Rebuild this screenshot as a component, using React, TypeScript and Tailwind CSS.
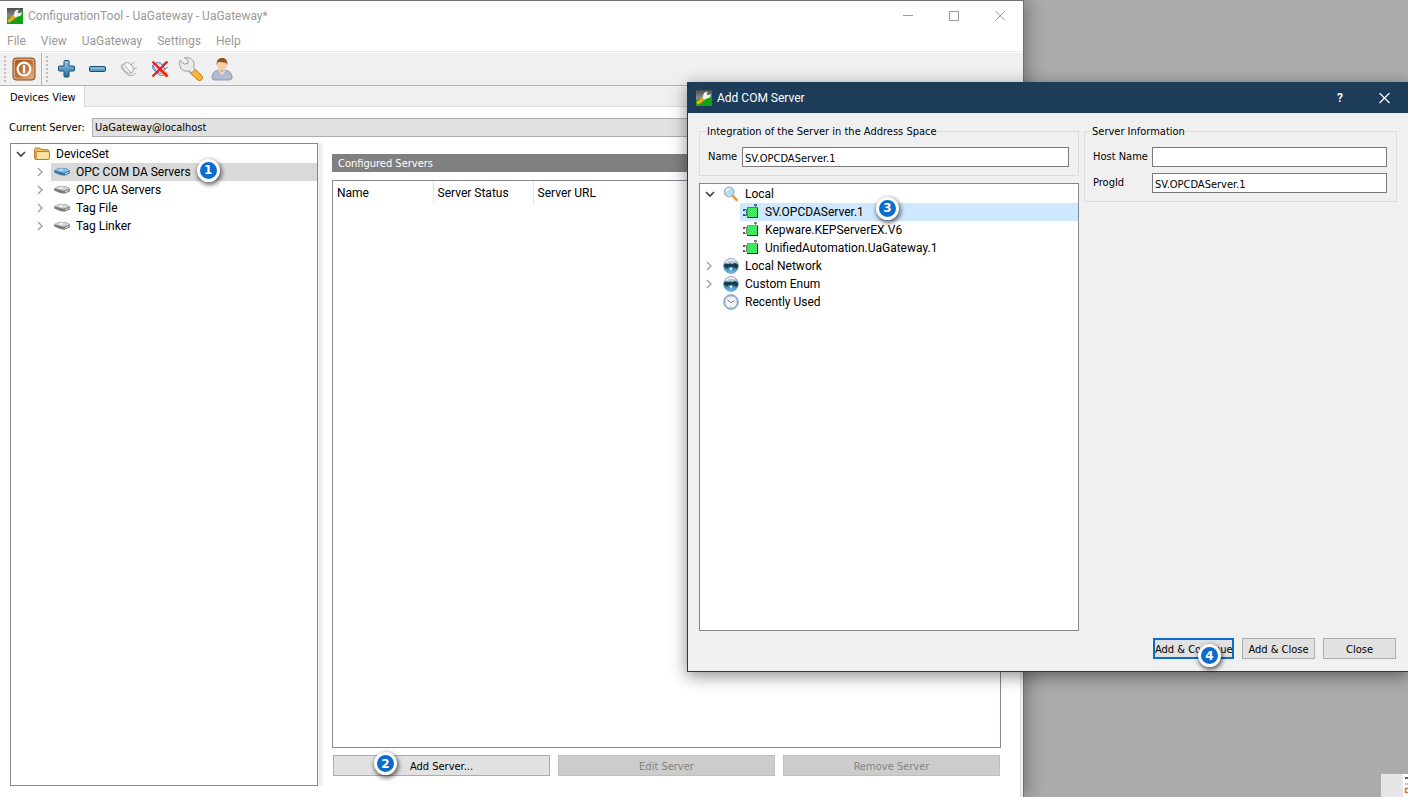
import React from "react";
import clsx from "clsx";

const AppIcon = () => (
  <svg width="16" height="16" viewBox="0 0 16 16" className="shrink-0">
    <defs>
      <linearGradient id="appTop" x1="0" y1="0" x2="0" y2="1">
        <stop offset="0" stopColor="#4c4c4c" />
        <stop offset="1" stopColor="#9a9a9a" />
      </linearGradient>
    </defs>
    <rect width="16" height="16" fill="#12a312" />
    <path d="M0 0H16V3C12 7 6 7 0 10Z" fill="url(#appTop)" />
    <path d="M2.4 12.6 7 8.8" stroke="#f6a423" strokeWidth="3.6" strokeLinecap="round" />
    <path
      d="M6.6 7.6 7.4 4.8C7.8 2.6 9.8 1.2 12 1.8L10.4 4 12.2 5.6 14.6 4C15.2 6.8 13 8.8 10.6 8.4L8.8 9.8Z"
      fill="#f2f2f2"
    />
  </svg>
);

const PowerIcon = () => (
  <svg width="24" height="24" viewBox="0 0 24 24">
    <defs>
      <linearGradient id="powerFill" x1="0" y1="0" x2="1" y2="1">
        <stop offset="0" stopColor="#a85a24" />
        <stop offset="0.6" stopColor="#c4763c" />
        <stop offset="1" stopColor="#e8b080" />
      </linearGradient>
    </defs>
    <rect x="1" y="1" width="22" height="22" rx="3" fill="#d9a273" stroke="#8a4a1c" />
    <rect x="3" y="3" width="18" height="18" rx="2" fill="url(#powerFill)" />
    <circle cx="12" cy="12" r="6.4" fill="none" stroke="#fff" strokeWidth="2.2" />
    <path d="M12 9V15" stroke="#fff" strokeWidth="2.4" strokeLinecap="round" />
  </svg>
);

const PlusIcon = () => (
  <svg width="20" height="20" viewBox="0 0 20 20">
    <defs>
      <linearGradient id="blueFill" x1="0" y1="0" x2="0" y2="1">
        <stop offset="0" stopColor="#a3cfe6" />
        <stop offset="0.5" stopColor="#5a9dc2" />
        <stop offset="1" stopColor="#2f6f99" />
      </linearGradient>
    </defs>
    <path
      d="M7 2.5Q7 1.5 8 1.5H11Q12 1.5 12 2.5V7H16.5Q17.5 7 17.5 8V11Q17.5 12 16.5 12H12V17Q12 18 11 18H8Q7 18 7 17V12H2.5Q1.5 12 1.5 11V8Q1.5 7 2.5 7H7Z"
      fill="url(#blueFill)"
      stroke="#1c4d6e"
    />
  </svg>
);

const MinusIcon = () => (
  <svg width="20" height="20" viewBox="0 0 20 20">
    <rect x="1.5" y="7.5" width="16" height="5" rx="1" fill="#5a9dc2" stroke="#1c4d6e" />
    <path d="M3 9H16" stroke="#a3cfe6" />
  </svg>
);

const PlugIcon = ({ crossed = false }: { crossed?: boolean }) => (
  <svg width="20" height="20" viewBox="0 0 20 20">
    <g
      fill={crossed ? "#cfe0f0" : "#f6f6f6"}
      stroke={crossed ? "#5b87b4" : "#a8a8a8"}
      strokeLinecap="round"
      strokeLinejoin="round"
    >
      <path d="M3 6 7 3.5 10.5 4 14.5 9 14 13 10 14.5 6.5 12.5Z" />
      <path d="M5 5.5 11.5 13.5" fill="none" />
      <path
        d="M12.5 5.5 15 3.5M15 10 17.5 8.5M3 6 2.5 9 6 13.5 10 16.5 14.5 16 16.5 14"
        fill="none"
      />
    </g>
    {crossed && (
      <>
        <path d="M12 12 17 17" stroke="#f0a52c" strokeWidth="4" />
        <path d="M2.5 2.5 17.5 17.5M17.5 2.5 2.5 17.5" stroke="#fb1010" strokeWidth="2" />
      </>
    )}
  </svg>
);

const WrenchIcon = () => (
  <svg width="24" height="24" viewBox="0 0 24 24">
    <path d="M13.5 14 20.5 20.5" stroke="#b87414" strokeWidth="6.6" strokeLinecap="round" />
    <path d="M13.5 14 20.5 20.5" stroke="#f9b23a" strokeWidth="5.2" strokeLinecap="round" />
    <path
      d="M1 3.2 5.2 7.2 8.6 6.4 9.2 3.4 5.6.8C9.5-.2 14 2 14.8 5.4 15.2 7.4 14.8 9 14.4 10.2L16.2 12.2 12.4 16 10.4 13.8C6.4 15 2.6 13.4 1.2 9.8.4 7.6.4 5.2 1 3.2Z"
      fill="#ebebeb"
      stroke="#9a9a9a"
    />
  </svg>
);

const UserIcon = () => (
  <svg width="24" height="24" viewBox="0 0 24 24">
    <path
      d="M2 20.5C2 16 5 13.5 9 13.2H15C19 13.5 22 16 22 20.5Q22 22.8 19.5 23H4.5Q2 22.8 2 20.5Z"
      fill="#b3bbcf"
      stroke="#7c88a8"
      strokeWidth="0.8"
    />
    <path d="M8.6 13.2 12 18 15.4 13.2Z" fill="#e9edf6" />
    <path d="M10 11H14V14L12 16 10 14Z" fill="#e9b384" />
    <ellipse cx="12" cy="7.6" rx="4.8" ry="5.6" fill="#f6cda3" />
    <path
      d="M6.8 8.2C6 3.4 8.4.9 12 .9S18.2 3.4 17.2 8.2C16.8 6.4 16 5.6 14.6 5.4 11.6 5.6 8.6 4.6 8 5.2 7.4 5.8 7.2 6.8 6.8 8.2Z"
      fill="#965321"
    />
  </svg>
);

const FolderIcon = () => (
  <svg width="16" height="16" viewBox="0 0 16 16">
    <path
      d="M.6 3.4Q.6 2 2 2H5.4Q6.4 2 7 3.6H13.4Q14.4 3.6 14.4 4.6V13.4H1.6Q.6 13.4.6 12.4Z"
      fill="#eebd67"
      stroke="#b97a2a"
    />
    <path d="M2.2 5.6H15.4V12.6Q15.4 13.5 14.4 13.5H2.2Z" fill="#fde3a0" stroke="#b97a2a" />
  </svg>
);

const DeviceIcon = ({ active = false }: { active?: boolean }) => (
  <svg width="16" height="16" viewBox="0 0 16 16">
    <path
      d="M.2 6.2Q4 4 7 3.8L13 4.6 15.8 6.6V9.4L10.4 11.8 6 11 .2 8.4Z"
      fill={active ? "#3f76a8" : "#7b7b7b"}
    />
    <path
      d="M.4 6.2Q4 4.2 7 4L12.6 4.8 15.4 6.6 9.8 8.8Z"
      fill={active ? "#8dbbe3" : "#d2d2d2"}
    />
    <path d="M4 6.2 7 5 10 5.8 7 7.2Z" fill={active ? "#bcdcf5" : "#f0f0f0"} />
    <path d="M11 10 14.6 8.3" stroke="#e8e8e8" />
  </svg>
);

const SearchIcon = () => (
  <svg width="16" height="16" viewBox="0 0 16 16">
    <path d="M9.6 9.6 13.6 13.8" stroke="#e79a34" strokeWidth="2.6" strokeLinecap="round" />
    <circle cx="6.2" cy="6" r="4.8" fill="#b9dcf3" stroke="#9fb3c4" strokeWidth="1.3" />
    <path d="M3.4 5.4Q4 3.2 6.4 3" stroke="#fff" strokeWidth="1.3" fill="none" />
  </svg>
);

const ComServerIcon = ({ selected = false }: { selected?: boolean }) => (
  <svg width="16" height="16" viewBox="0 0 16 16" shapeRendering="crispEdges">
    <defs>
      <pattern id="checker" width="2" height="2" patternUnits="userSpaceOnUse">
        <rect width="2" height="2" fill="#2fdc50" />
        <rect width="1" height="1" fill="#6fe08a" />
        <rect x="1" y="1" width="1" height="1" fill="#6fe08a" />
      </pattern>
    </defs>
    <path
      d="M2 5H5V6H2ZM2 11H4V12H2ZM3 5H4V12H3ZM12 0H13V4H12ZM11 0H14V2H11Z"
      fill={selected ? "#3b6f97" : "#808080"}
    />
    <path d="M0 5H2V7H0ZM0 10H2V12H0Z" fill={selected ? "#24567e" : "#606060"} />
    <rect x="4" y="3" width="11" height="11" fill={selected ? "#3b8ca0" : "#8a9a8e"} />
    <rect x="5" y="4" width="9" height="9" fill="url(#checker)" />
    <path d="M4 13H14V4H15V14H4Z" fill={selected ? "#12405c" : "#26302a"} />
  </svg>
);

const GlobeIcon = () => (
  <svg width="16" height="16" viewBox="0 0 16 16">
    <defs>
      <linearGradient id="globe" x1="0" y1="0" x2="0" y2="1">
        <stop offset="0" stopColor="#c3cfd9" />
        <stop offset="0.3" stopColor="#a9c4d8" />
        <stop offset="0.5" stopColor="#1f6299" />
        <stop offset="1" stopColor="#6ccbf5" />
      </linearGradient>
    </defs>
    <circle cx="8" cy="8" r="7.4" fill="url(#globe)" stroke="#7b94a8" strokeWidth="0.8" />
    <path
      d="M1 6.8 3 5.4 5.4 6.2 7.4 5.2 8.6 6.4 11.6 5 14.4 6 14.8 8.4 13.4 11 12.6 9.6 11.8 10.6 10.8 8.8 8.8 8.4 7 9 5.6 8.6 5 10.4 3.8 9.8 1.4 9Z"
      fill="#173a48"
    />
    <path d="M6.2 9.8 8.8 9.6 9.4 11 7.8 12.8Z" fill="#f0f4ee" />
    <path d="M3 4.6 5 2.6 8 1.8 12 2.8" stroke="#fff" strokeWidth="1.4" fill="none" opacity="0.8" />
  </svg>
);

const ClockIcon = () => (
  <svg width="16" height="16" viewBox="0 0 16 16">
    <circle cx="8" cy="8" r="6.7" fill="#f1f6fb" stroke="#8fb3d6" strokeWidth="1.7" />
    <circle cx="8" cy="8" r="7.5" fill="none" stroke="#6d8fb3" strokeWidth="0.5" />
    <path d="M4.4 5.8 7.8 8.6 11.4 6.8" stroke="#7a7a7a" fill="none" />
    <path d="M8 2.6V3.6M8 12.4V13.4M2.6 8H3.6M12.4 8H13.4" stroke="#e39a3c" />
  </svg>
);

const Chevron = ({ open }: { open: boolean }) => (
  <svg width="10" height="10" viewBox="0 0 10 10" fill="none">
    {open ? (
      <path d="M1 3 5 7 9 3" stroke="#404040" strokeWidth="1.6" />
    ) : (
      <path d="M2 1 6 5 2 9" stroke="#a0a0a0" strokeWidth="1.4" />
    )}
  </svg>
);

const StepBadge = ({ step, className }: { step: number; className?: string }) => (
  <span
    className={clsx(
      "flex size-[23px] shrink-0 items-center justify-center rounded-full border-[3px] border-white bg-[#0a6cce] font-['DejaVu_Sans',sans-serif] text-xs font-bold leading-none text-white shadow-[1px_2px_4px_1px_rgba(0,0,0,0.55)]",
      className,
    )}
  >
    {step}
  </span>
);

const TreeRow = ({
  label,
  icon,
  open,
  child = false,
  highlight,
  badge,
}: {
  label: string;
  icon: React.ReactNode;
  open?: boolean;
  child?: boolean;
  highlight?: string;
  badge?: React.ReactNode;
}) => (
  <li className={clsx("flex h-[18px] items-center", child && "pl-5")}>
    <span className="flex w-5 shrink-0 items-center justify-center">
      {open !== undefined && (
        <button type="button" aria-label={open ? "Collapse" : "Expand"}>
          <Chevron open={open} />
        </button>
      )}
    </span>
    <span className={clsx("flex h-full flex-1 items-center gap-1.5 pl-[3px]", highlight)}>
      {icon}
      <span className="whitespace-nowrap">{label}</span>
      {badge}
    </span>
  </li>
);

const ToolbarButton = ({ label, children }: { label: string; children: React.ReactNode }) => (
  <button
    type="button"
    aria-label={label}
    className="flex h-6 w-[31px] items-center justify-center"
  >
    {children}
  </button>
);

const Grip = () => (
  <span className="h-[26px] border-l-2 border-dotted border-[#bdbdbd]" />
);

const Toolbar = () => (
  <div className="flex h-[33px] items-center border-b border-[#b4b4b4] bg-[#f0f0f0] pl-1">
    <Grip />
    <button type="button" aria-label="Exit" className="ml-1.5">
      <PowerIcon />
    </button>
    <span className="ml-[5px] h-full border-l border-[#b4b4b4]" />
    <span className="ml-1 flex">
      <Grip />
    </span>
    <span className="ml-[3px] flex">
      <ToolbarButton label="Add">
        <PlusIcon />
      </ToolbarButton>
      <ToolbarButton label="Remove">
        <MinusIcon />
      </ToolbarButton>
      <ToolbarButton label="Connect">
        <PlugIcon />
      </ToolbarButton>
      <ToolbarButton label="Disconnect">
        <PlugIcon crossed />
      </ToolbarButton>
      <ToolbarButton label="Configure">
        <WrenchIcon />
      </ToolbarButton>
      <ToolbarButton label="User">
        <UserIcon />
      </ToolbarButton>
    </span>
  </div>
);

const MenuBar = () => (
  <nav className="flex h-[21px] items-center gap-[15px] border-b border-[#ebebeb] pl-[7px] text-xs text-[#999]">
    {["File", "View", "UaGateway", "Settings", "Help"].map((item) => (
      <button key={item} type="button">
        {item}
      </button>
    ))}
  </nav>
);

const TitleBar = () => (
  <header className="flex h-[30px] items-center pl-[7px] pr-[17px]">
    <AppIcon />
    <h1 className="ml-[5px] flex-1 text-xs text-[#999]">
      ConfigurationTool - UaGateway - UaGateway*
    </h1>
    <div className="flex gap-[35px] text-[#999]">
      <button type="button" aria-label="Minimize">
        <svg width="11" height="11" viewBox="0 0 11 11">
          <path d="M0 4.5H10" stroke="currentColor" />
        </svg>
      </button>
      <button type="button" aria-label="Maximize">
        <svg width="11" height="11" viewBox="0 0 11 11">
          <rect x="0.5" y="0.5" width="9" height="9" fill="none" stroke="currentColor" />
        </svg>
      </button>
      <button type="button" aria-label="Close window">
        <svg width="11" height="11" viewBox="0 0 11 11">
          <path d="M.5 0 10 9.5M10 0 .5 9.5" stroke="currentColor" />
        </svg>
      </button>
    </div>
  </header>
);

const DeviceTree = () => (
  <ul className="w-[308px] shrink-0 border border-[#828790] bg-white pt-px text-xs">
    <TreeRow label="DeviceSet" icon={<FolderIcon />} open />
    <TreeRow
      label="OPC COM DA Servers"
      icon={<DeviceIcon active />}
      open={false}
      child
      highlight="bg-[#d9d9d9]"
      badge={<StepBadge step={1} className="mb-1" />}
    />
    <TreeRow label="OPC UA Servers" icon={<DeviceIcon />} open={false} child />
    <TreeRow label="Tag File" icon={<DeviceIcon />} open={false} child />
    <TreeRow label="Tag Linker" icon={<DeviceIcon />} open={false} child />
  </ul>
);

const ConfiguredServers = () => (
  <section className="ml-[9px] flex flex-1 flex-col pb-2.5 pt-[11px]">
    <h2 className="h-[18px] bg-[#808080] pl-1.5 font-['DejaVu_Sans_Condensed','DejaVu_Sans',sans-serif] text-[11px] leading-5 text-white">
      Configured Servers
    </h2>
    <div className="mt-2 flex-1 border border-[#828790]">
      <table className="w-full table-fixed text-left text-xs">
        <thead>
          <tr className="h-[23px]">
            <th className="w-[100px] border-r border-[#e5e5e5] pl-1 font-normal">Name</th>
            <th className="w-[100px] border-r border-[#e5e5e5] pl-1 font-normal">
              Server Status
            </th>
            <th className="pl-1 font-normal">Server URL</th>
          </tr>
        </thead>
        <tbody />
      </table>
    </div>
    <div className="mt-[7px] flex gap-2 px-px font-['DejaVu_Sans_Condensed','DejaVu_Sans',sans-serif] text-[11px]">
      <button
        type="button"
        className="relative h-[21px] flex-1 border border-[#adadad] bg-[#e1e1e1] pt-0.5 leading-4"
      >
        Add Server...
        <StepBadge step={2} className="absolute -top-1 left-10" />
      </button>
      <button
        type="button"
        disabled
        className="h-[21px] flex-1 border border-[#bfbfbf] bg-[#ccc] pt-0.5 leading-4 text-[#838383]"
      >
        Edit Server
      </button>
      <button
        type="button"
        disabled
        className="h-[21px] flex-1 border border-[#bfbfbf] bg-[#ccc] pt-0.5 leading-4 text-[#838383]"
      >
        Remove Server
      </button>
    </div>
  </section>
);

const MainWindow = () => (
  <main className="flex min-h-screen w-8/11 flex-col border-r border-t border-[#707070] bg-white shadow-[4px_0_16px_rgba(0,0,0,0.3)]">
    <TitleBar />
    <MenuBar />
    <div className="h-px bg-white" />
    <Toolbar />
    <div className="flex h-[21px] bg-[#f0f0f0] font-['DejaVu_Sans_Condensed','DejaVu_Sans',sans-serif] text-[11px]">
      <button type="button" className="border-r border-[#dcdcdc] bg-white pl-2.5 pr-2 pt-[3px]">
        Devices View
      </button>
      <span className="flex-1 border-b border-[#dcdcdc]" />
    </div>
    <div className="flex flex-1 flex-col bg-[#f0f0f0] pr-0.5">
      <div className="flex flex-1 flex-col border-r border-[#dcdcdc] bg-white pb-[11px] pl-[9px] pr-[19px] pt-[11px]">
        <div className="flex items-center font-['DejaVu_Sans_Condensed','DejaVu_Sans',sans-serif] text-[11px]">
          <label htmlFor="current-server" className="w-[83px] pt-0.5">
            Current Server:
          </label>
          <select
            id="current-server"
            className="h-[19px] flex-1 appearance-none border border-[#adadad] bg-[#e1e1e1] pl-0.5 pt-px"
          >
            <option>UaGateway@localhost</option>
          </select>
        </div>
        <div className="mt-1.5 flex flex-1 pl-px">
          <DeviceTree />
          <div className="w-[5px] bg-[#f0f0f0]" />
          <ConfiguredServers />
        </div>
      </div>
    </div>
  </main>
);

const Field = ({
  id,
  label,
  value,
  labelWidth,
}: {
  id: string;
  label: string;
  value: string;
  labelWidth: string;
}) => (
  <div className="flex items-center">
    <label htmlFor={id} className={clsx("pt-px", labelWidth)}>
      {label}
    </label>
    <input
      id={id}
      type="text"
      defaultValue={value}
      className="h-5 min-w-0 flex-1 border border-[#7a7a7a] bg-white pl-0.5 pt-0.5 outline-none"
    />
  </div>
);

const ServerTree = () => (
  <ul className="mt-[7px] flex-1 border border-[#828790] bg-white pt-px font-[Roboto,sans-serif] text-xs">
    <TreeRow label="Local" icon={<SearchIcon />} open />
    <TreeRow
      label="SV.OPCDAServer.1"
      icon={<ComServerIcon selected />}
      child
      highlight="bg-[#cde8ff]"
      badge={<StepBadge step={3} className="mb-2 ml-1.5" />}
    />
    <TreeRow label="Kepware.KEPServerEX.V6" icon={<ComServerIcon />} child />
    <TreeRow label="UnifiedAutomation.UaGateway.1" icon={<ComServerIcon />} child />
    <TreeRow label="Local Network" icon={<GlobeIcon />} open={false} />
    <TreeRow label="Custom Enum" icon={<GlobeIcon />} open={false} />
    <TreeRow label="Recently Used" icon={<ClockIcon />} />
  </ul>
);

const AddServerDialog = () => (
  <div
    role="dialog"
    aria-labelledby="dialog-title"
    className="absolute bottom-[125px] left-[687px] right-0 top-[82px] flex flex-col border border-r-0 border-[#1c3c5a] bg-[#f0f0f0] font-['DejaVu_Sans_Condensed','DejaVu_Sans',sans-serif] text-[11px] shadow-[0_4px_16px_rgba(0,0,0,0.45)]"
  >
    <header className="flex h-[30px] items-center bg-[#1c3c5a] pl-2 pr-[18px] font-[Roboto,sans-serif] text-white">
      <AppIcon />
      <h2 id="dialog-title" className="ml-[5px] flex-1 text-xs">
        Add COM Server
      </h2>
      <button type="button" aria-label="Help" className="mr-9 text-xs font-semibold">
        ?
      </button>
      <button type="button" aria-label="Close dialog">
        <svg width="11" height="11" viewBox="0 0 11 11">
          <path d="M.5 0 10.5 10M10.5 0 .5 10" stroke="currentColor" strokeWidth="1.2" />
        </svg>
      </button>
    </header>
    <div className="flex flex-1 flex-col px-[11px] pb-3 pt-2.5">
      <div className="flex flex-1 gap-[5px]">
        <div className="flex flex-1 flex-col">
          <fieldset className="border border-[#dcdcdc] pb-2 pl-2 pr-[9px] pt-2">
            <legend className="-ml-px h-4 leading-[18px]">
              Integration of the Server in the Address Space
            </legend>
            <Field id="name" label="Name" value="SV.OPCDAServer.1" labelWidth="w-[34px]" />
          </fieldset>
          <ServerTree />
        </div>
        <div className="w-[313px]">
          <fieldset className="flex flex-col gap-1.5 border border-[#dcdcdc] pb-2 pl-2 pr-[9px] pt-2">
            <legend className="-ml-px h-4 leading-[18px]">Server Information</legend>
            <Field id="host" label="Host Name" value="" labelWidth="w-[59px]" />
            <Field id="progid" label="ProgId" value="SV.OPCDAServer.1" labelWidth="w-[59px]" />
          </fieldset>
        </div>
      </div>
      <div className="mt-[7px] flex justify-end gap-2 pr-px">
        <button
          type="button"
          className="relative h-[21px] w-[81px] whitespace-nowrap border-2 border-[#0a6cce] bg-[#e1e1e1] pt-0.5 leading-4"
        >
          Add &amp; Continue
          <StepBadge step={4} className="absolute left-[43px] top-1" />
        </button>
        <button
          type="button"
          className="h-[21px] w-[73px] border border-[#adadad] bg-[#e1e1e1] pt-0.5 leading-4"
        >
          Add &amp; Close
        </button>
        <button
          type="button"
          className="h-[21px] w-[73px] border border-[#adadad] bg-[#e1e1e1] pt-0.5 leading-4"
        >
          Close
        </button>
      </div>
    </div>
  </div>
);

const DesktopFragment = () => (
  <div className="absolute bottom-0 right-0 flex h-[23px] w-[27px] bg-[#e6e6e6]">
    <svg width="5" height="23" viewBox="0 0 5 23" className="ml-auto">
      <rect width="5" height="23" fill="#fff" />
      <path d="M2 4H5" stroke="#3d7a3d" strokeWidth="2" />
      <path d="M2 10H3M4 10H5" stroke="#aaa" strokeWidth="2" />
      <path d="M5 14.5H2.5V18.5H5" stroke="#c87a35" strokeWidth="1.5" fill="none" />
    </svg>
  </div>
);

const App = () => {
  return (
    <div className="relative min-h-screen overflow-hidden bg-[#ababab] font-[Roboto,'Open_Sans',sans-serif] text-black">
      <MainWindow />
      <AddServerDialog />
      <DesktopFragment />
    </div>
  );
};

export default App;
